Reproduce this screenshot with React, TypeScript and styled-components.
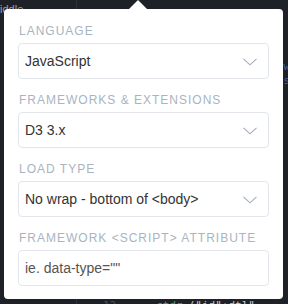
import React from "react";
import styled, { createGlobalStyle } from "styled-components";

const GlobalStyle = createGlobalStyle`
  html, body {
    margin: 0;
    padding: 0;
    background: #1e2128;
  }
  body {
    font-family: "Liberation Sans", Arial, sans-serif;
  }
`;

const fields = [
  { label: "Language", value: "JavaScript", kind: "select" },
  { label: "Frameworks & Extensions", value: "D3 3.x", kind: "select" },
  { label: "Load Type", value: "No wrap - bottom of <body>", kind: "select" },
  { label: "Framework <script> attribute", value: 'ie. data-type=""', kind: "input" },
];

const Chevron = () => (
  <svg width="14" height="8" viewBox="0 0 14 8" fill="none">
    <polyline points="0.5,0.8 7,6.8 13.5,0.8" stroke="#a3adb8" strokeWidth="1.1" />
  </svg>
);

export default function App() {
  return (
    <>
      <GlobalStyle />
      <Screen>
        <Editor>
          <Sidebar>
            <SideTitle>fiddle</SideTitle>
          </Sidebar>
          <CodePane>
            <CodeLine $top={60}><Blue>w</Blue></CodeLine>
            <CodeLine $top={74}><Blue>s</Blue></CodeLine>
            <GutterLine>
              <LineNo>12</LineNo>
              <Green>ctdr</Green>
              <Plain>("id":dtl"</Plain>
            </GutterLine>
          </CodePane>
        </Editor>

        <Popover>
          <Arrow />
          {fields.map((f) => (
            <Field key={f.label}>
              <Label>{f.label}</Label>
              <Control $kind={f.kind}>
                <span>{f.value}</span>
                {f.kind === "select" && <Chevron />}
              </Control>
            </Field>
          ))}
        </Popover>
      </Screen>
    </>
  );
}

const Screen = styled.div`
  position: relative;
  width: 288px;
  height: 304px;
  overflow: hidden;
  background: #1e2128;
`;

const Editor = styled.div`
  display: grid;
  grid-template-columns: 77px 1fr;
  height: 100%;
`;

const Sidebar = styled.div`
  border-right: 1px solid #2b2f37;
  padding: 3px 0 0 0;
`;

const SideTitle = styled.div`
  color: #9aa0a8;
  font-size: 11px;
  margin-left: -3px;
`;

const CodePane = styled.div`
  position: relative;
  font-family: "DejaVu Sans Mono", monospace;
  font-size: 11px;
`;

const CodeLine = styled.div<{ $top: number }>`
  position: absolute;
  right: -2px;
  top: ${(p) => p.$top}px;
`;

const GutterLine = styled.div`
  position: absolute;
  left: 26px;
  bottom: -8px;
  display: flex;
  gap: 40px;
`;

const LineNo = styled.span`
  color: #4a505a;
`;

const Green = styled.span`
  color: #3fae5c;
  margin-right: -34px;
`;

const Plain = styled.span`
  color: #c9ccd2;
`;

const Blue = styled.span`
  color: #3f5f92;
`;

const Popover = styled.div`
  position: absolute;
  left: 4px;
  top: 9px;
  width: 279px;
  box-sizing: border-box;
  background: #fff;
  border-radius: 4px;
  padding: 14px 14px 0;
  display: flex;
  flex-direction: column;
  gap: 13px;
  height: 290px;
`;

const Arrow = styled.div`
  position: absolute;
  top: -9px;
  left: 125px;
  width: 0;
  height: 0;
  border-left: 9px solid transparent;
  border-right: 9px solid transparent;
  border-bottom: 9px solid #fff;
`;

const Field = styled.div`
  display: flex;
  flex-direction: column;
  gap: 4px;
`;

const Label = styled.div`
  height: 16px;
  line-height: 16px;
  font-size: 12px;
  letter-spacing: 1px;
  text-transform: uppercase;
  color: #a9b4bf;
  padding-left: 1px;
  white-space: nowrap;
`;

const Control = styled.div<{ $kind: string }>`
  height: 36px;
  box-sizing: border-box;
  border: 1px solid #e3e6ea;
  border-radius: 4px;
  display: flex;
  align-items: center;
  justify-content: space-between;
  padding: 0 11px 0 6px;
  font-size: 14px;
  color: ${(p) => (p.$kind === "input" ? "#555" : "#333")};
  white-space: nowrap;

  svg {
    margin-top: 1px;
  }
`;
